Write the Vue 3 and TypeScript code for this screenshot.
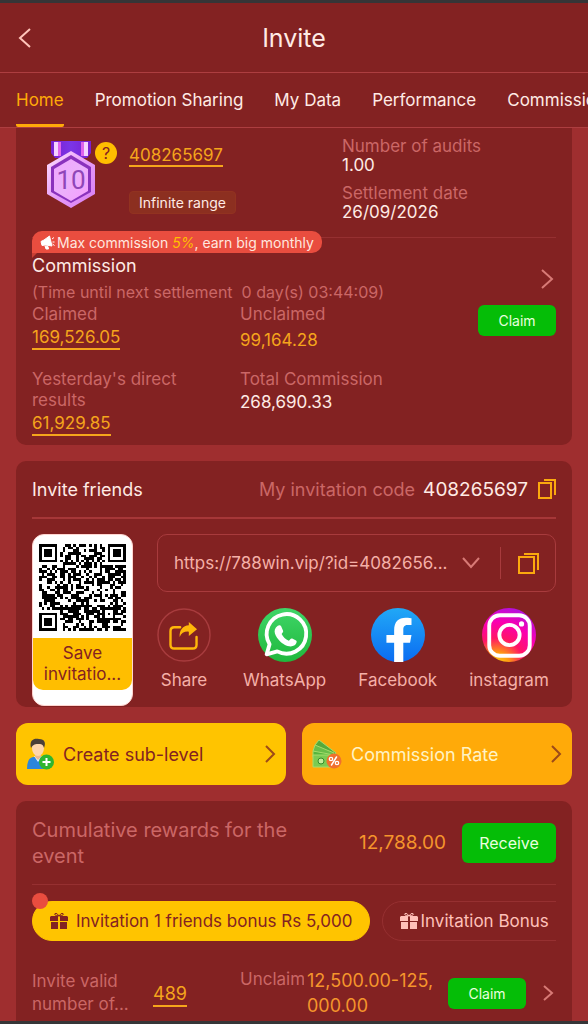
<script setup lang="ts">
import { ref } from 'vue'

interface Tab {
  id: string
  label: string
}

const tabs: Tab[] = [
  { id: 'home', label: 'Home' },
  { id: 'promotion', label: 'Promotion Sharing' },
  { id: 'data', label: 'My Data' },
  { id: 'performance', label: 'Performance' },
  { id: 'commission', label: 'Commission' },
]
const activeTab = ref<string>('home')
const activeBonus = ref<number>(0)

const QR_SIZE = 33

function inFinder(x: number, y: number): boolean {
  return (x < 8 && y < 8) || (x > QR_SIZE - 9 && y < 8) || (x < 8 && y > QR_SIZE - 9)
}

function ring(x: number, y: number, cx: number, cy: number): number {
  return Math.max(Math.abs(x - cx), Math.abs(y - cy))
}

function buildQr(): string {
  let seed = 408265697
  let d = ''
  for (let y = 0; y < QR_SIZE; y++) {
    for (let x = 0; x < QR_SIZE; x++) {
      seed = (Math.imul(seed, 1664525) + 1013904223) >>> 0
      let dark = ((seed >>> 16) & 255) < 132
      if (inFinder(x, y)) {
        const cx = x < 8 ? 3 : QR_SIZE - 4
        const cy = y < 8 ? 3 : QR_SIZE - 4
        const r = ring(x, y, cx, cy)
        dark = r === 3 || r < 2
      } else if (ring(x, y, 26, 26) < 3) {
        dark = ring(x, y, 26, 26) !== 1
      } else if (x === 6 || y === 6) {
        dark = (x + y) % 2 === 0
      }
      if (dark) d += `M${x} ${y}h1v1h-1z`
    }
  }
  return d
}

const qrPath = buildQr()
</script>

<template>
  <div class="screen">
    <header class="topbar">
      <button class="back" type="button" aria-label="Back">
        <svg width="14" height="22" viewBox="0 0 14 22"><path d="M12 2 2 11l10 9" /></svg>
      </button>
      <h1>Invite</h1>
    </header>

    <nav class="tabs">
      <button
        v-for="tab in tabs"
        :key="tab.id"
        type="button"
        class="tab"
        :class="{ active: activeTab === tab.id }"
        @click="activeTab = tab.id"
      >{{ tab.label }}</button>
    </nav>

    <main class="content">
      <section class="card summary">
        <div class="profile">
          <div class="medal">
            <svg class="medal-art" width="54" height="70" viewBox="0 0 54 70">
              <defs>
                <linearGradient id="rib" x1="0" x2="1" y1="0" y2="0">
                  <stop offset="0" stop-color="#7a1fd0" /><stop offset=".5" stop-color="#7b35e6" /><stop offset="1" stop-color="#7a1fd0" />
                </linearGradient>
                <linearGradient id="rim" x1="0" x2="1" y1="0" y2="1">
                  <stop offset="0" stop-color="#ffe3ff" /><stop offset=".5" stop-color="#e79cf8" /><stop offset="1" stop-color="#d77cf2" />
                </linearGradient>
                <linearGradient id="face" x1="0" x2="1" y1="0" y2="1">
                  <stop offset="0" stop-color="#f0a6ff" /><stop offset=".5" stop-color="#ecb0fb" /><stop offset="1" stop-color="#f79cff" />
                </linearGradient>
              </defs>
              <path d="M7 0h40v12l-4 5H11l-4-5z" fill="url(#rib)" />
              <path d="M10 1h4v14h-4zM40 1h4v14h-4z" fill="#f5d3ff" />
              <path d="M14 1h3v14h-3zM37 1h3v14h-3z" fill="#df62ec" />
              <path d="M27 10 51 24v29L27 67 3 53V24z" fill="url(#rim)" />
              <path d="M27 14 47 26v25L27 62 7 51V26z" fill="#8a32bd" />
              <path d="M27 18 44 28v22L27 60 10 50V28z" fill="url(#face)" />
              <text x="27" y="48" text-anchor="middle">10</text>
            </svg>
            <button class="help" type="button" aria-label="Help">?</button>
          </div>
          <div class="identity">
            <a href="#" class="link">408265697</a>
            <span class="range">Infinite range</span>
          </div>
          <dl class="facts">
            <div><dt>Number of audits</dt><dd>1.00</dd></div>
            <div><dt>Settlement date</dt><dd>26/09/2026</dd></div>
          </dl>
        </div>

        <div class="commission">
          <p class="ribbon">
            <svg width="15" height="15" viewBox="0 0 15 15">
              <path d="M1 6.500 4 5l5.500-4 2.500 10-6.500-1-3.500.500zM5 11l3 .500.500 2.500H6zM12 4l2-1.500M12.500 7h2M12.500 9l2 1.500" />
            </svg>
            <span>Max commission <em>5%</em>, earn big monthly</span>
          </p>
          <div class="commission-main">
            <h2>Commission</h2>
            <p class="timer"><span class="paren">(</span>Time until next settlement&nbsp; 0 day(s) 03:44:09<span class="paren">)</span></p>
            <div class="figures">
              <div class="figure"><span class="label">Claimed</span><a href="#" class="link">169,526.05</a></div>
              <div class="figure"><span class="label">Unclaimed</span><span class="plain gold lower">99,164.28</span></div>
              <div class="figure"><span class="label">Yesterday's direct results</span><a href="#" class="link">61,929.85</a></div>
              <div class="figure"><span class="label">Total Commission</span><span class="plain">268,690.33</span></div>
            </div>
          </div>
          <div class="commission-side">
            <button class="more" type="button" aria-label="Commission details">
              <svg width="14" height="20" viewBox="0 0 14 20"><path d="m2 1 10 9-10 9" /></svg>
            </button>
            <button class="green small" type="button">Claim</button>
          </div>
        </div>
      </section>

      <section class="card invite">
        <header class="invite-head">
          <h2>Invite friends</h2>
          <span class="code-label">My invitation code</span>
          <strong>408265697</strong>
          <button class="copy" type="button" aria-label="Copy invitation code">
            <svg width="18" height="20" viewBox="0 0 18 20"><path d="M1 4h12v15H1zM6 1h11v15" /></svg>
          </button>
        </header>
        <div class="invite-body">
          <button class="qr" type="button">
            <svg class="qr-code" viewBox="0 0 33 33" shape-rendering="crispEdges"><path :d="qrPath" /></svg>
            <span class="qr-label">Save<br />invitatio...</span>
          </button>
          <div class="sharing">
            <div class="url">
              <select aria-label="Invitation link">
                <option>https://788win.vip/?id=4082656...</option>
              </select>
              <svg class="down" width="18" height="12" viewBox="0 0 18 12"><path d="m1 1 8 9 8-9" /></svg>
              <button class="copy" type="button" aria-label="Copy link">
                <svg width="22" height="22" viewBox="0 0 22 22"><path d="M2 5h15v16H2zM7 2h14v16" /></svg>
              </button>
            </div>
            <div class="channels">
              <button class="channel" type="button">
                <svg width="54" height="54" viewBox="0 0 56 56">
                  <circle cx="28" cy="28" r="27" fill="none" stroke="#a83c3e" stroke-width="1.500" />
                  <path d="M24 20h-6q-4 0-4 4v14q0 4 4 4h19q4 0 4-4v-8" fill="none" stroke="#ffb70a" stroke-width="2.500" stroke-linecap="round" />
                  <path d="M33 14.500 41.500 22 33 29v-4.500q-7-.500-9.500 5.500c-.500-7 3.500-11.500 9.500-12z" fill="#ffb70a" />
                </svg>
                <span>Share</span>
              </button>
              <button class="channel" type="button">
                <svg width="54" height="54" viewBox="0 0 56 56">
                  <defs><linearGradient id="wa" x1="0" x2="0" y1="0" y2="1"><stop offset="0" stop-color="#3fd568" /><stop offset="1" stop-color="#1fb83c" /></linearGradient></defs>
                  <circle cx="28" cy="28" r="28" fill="url(#wa)" />
                  <path d="m9 48 3-10.500a20.500 20.500 0 1 1 8 7.500z" fill="none" stroke="#fff" stroke-width="4" stroke-linejoin="round" />
                  <path d="M20.500 18.500c1-1 3-1 3.500.500l2 4.500c.500 1-.500 2-1.500 3.500 1.500 3 4 5.500 7.500 7 1.500-1.500 2-3 3.500-2.300l4 2c1.500.800 0 4-1.500 5-5 3.300-12-1-15.500-4.500-4-4-8.500-11-2-15.700z" fill="#fff" />
                </svg>
                <span>WhatsApp</span>
              </button>
              <button class="channel" type="button">
                <svg width="54" height="54" viewBox="0 0 56 56">
                  <defs><linearGradient id="fb" x1="0" x2="0" y1="0" y2="1"><stop offset="0" stop-color="#21a8f6" /><stop offset="1" stop-color="#0b6cf2" /></linearGradient></defs>
                  <circle cx="28" cy="28" r="28" fill="url(#fb)" />
                  <path d="M24 56V36h-8v-8h8v-5c0-9 4.500-13 12-13 3 0 6 .500 6 .500v7h-4c-4 0-4.500 2.500-4.500 5V28h8.500l-1.500 8h-7v20q-5 .500-9.500 0z" fill="#fff" />
                </svg>
                <span>Facebook</span>
              </button>
              <button class="channel" type="button">
                <svg width="54" height="54" viewBox="0 0 56 56">
                  <defs>
                    <radialGradient id="ig" cx=".28" cy="1.050" r="1.100">
                      <stop offset="0" stop-color="#ffd21a" /><stop offset=".2" stop-color="#ff9c10" /><stop offset=".45" stop-color="#ff1566" /><stop offset=".72" stop-color="#fb00b0" /><stop offset="1" stop-color="#b012e0" />
                    </radialGradient>
                  </defs>
                  <circle cx="28" cy="28" r="28" fill="url(#ig)" />
                  <rect x="7.500" y="7.500" width="42" height="42" rx="11" fill="none" stroke="#fff" stroke-width="4" />
                  <circle cx="28.500" cy="28" r="10.500" fill="none" stroke="#fff" stroke-width="4" />
                  <circle cx="41" cy="16.500" r="2.700" fill="#fff" />
                </svg>
                <span>instagram</span>
              </button>
            </div>
          </div>
        </div>
      </section>

      <div class="shortcuts">
        <button class="shortcut yellow" type="button">
          <svg width="28" height="32" viewBox="0 0 28 32">
            <path d="M1 31q0-11 6-12h9q6 1 6 12z" fill="#2c86dc" />
            <path d="m8 18 4 6 4-6z" fill="#eaf4ff" />
            <path d="M9 14h6v5l-3 3-3-3z" fill="#edb98d" />
            <ellipse cx="12" cy="10" rx="6" ry="8" fill="#ffd6ad" />
            <path d="M5 10C3 2 8 0 13 1c6 0 7 4 5 9-1-4-3-4-6-4-4 0-5 1-7 4z" fill="#4b4038" />
            <circle cx="20.500" cy="24" r="7.500" fill="#2fb52f" />
            <path d="M20.500 20v8M16.500 24h8" stroke="#fff" stroke-width="2" />
          </svg>
          <span>Create sub-level</span>
          <svg class="arrow" width="12" height="18" viewBox="0 0 12 18"><path d="m2 1 8 8-8 8" /></svg>
        </button>
        <button class="shortcut orange" type="button">
          <svg width="30" height="30" viewBox="0 0 30 30">
            <g stroke="#a5dc6c">
              <path d="m7 1 17 13-4 5L3 6z" fill="#55a93c" />
              <path d="m3 6 19 8-2 6L1 12z" fill="#69bd49" />
              <path d="m1 12 21 4v6L1 18z" fill="#55b53d" />
              <path d="M1 16h21v12H1z" fill="#7bcb52" />
            </g>
            <circle cx="9" cy="22" r="3" fill="#c6ec9a" stroke="#358b2b" />
            <circle cx="22" cy="22" r="7.500" fill="#f0702e" />
            <path d="m19.500 26 5-8" stroke="#fff" stroke-width="1.500" stroke-linecap="round" />
            <circle cx="19" cy="20" r="1.700" fill="none" stroke="#fff" stroke-width="1.300" />
            <circle cx="25" cy="24" r="1.700" fill="none" stroke="#fff" stroke-width="1.300" />
          </svg>
          <span>Commission Rate</span>
          <svg class="arrow" width="12" height="18" viewBox="0 0 12 18"><path d="m2 1 8 8-8 8" /></svg>
        </button>
      </div>

      <section class="card rewards">
        <header class="reward-head">
          <h2>Cumulative rewards for the event</h2>
          <span class="total">12,788.00</span>
          <button class="green" type="button">Receive</button>
        </header>
        <div class="bonus-wrap">
          <div class="bonuses">
            <button class="bonus" :class="{ on: activeBonus === 0 }" type="button" @click="activeBonus = 0">
              <svg width="18" height="18" viewBox="0 0 18 18"><path d="M1 4h7v5H0V5zM10 4h7l1 1v4h-8zM1 10h7v7H1zM10 10h7v7h-7z" /><path class="bow" d="M9 4Q3 3 5 1.500 7 .500 9 4q2-3.500 4-2.500 2 1.500-4 2.500" /></svg>
              <span>Invitation 1 friends bonus Rs 5,000</span>
            </button>
            <button class="bonus tight" :class="{ on: activeBonus === 1 }" type="button" @click="activeBonus = 1">
              <svg width="18" height="18" viewBox="0 0 18 18"><path d="M1 4h7v5H0V5zM10 4h7l1 1v4h-8zM1 10h7v7H1zM10 10h7v7h-7z" /><path class="bow" d="M9 4Q3 3 5 1.500 7 .500 9 4q2-3.500 4-2.500 2 1.500-4 2.500" /></svg>
              <span>Invitation Bonus</span>
            </button>
          </div>
          <i class="dot"></i>
        </div>
        <div class="reward-row">
          <span class="label valid">Invite valid number of...</span>
          <a href="#" class="link count">489</a>
          <span class="label unclaim">Unclaim</span>
          <span class="amount">12,500.00-125,<wbr />000.00</span>
          <button class="green small" type="button">Claim</button>
          <button class="more slim" type="button" aria-label="Reward details">
            <svg width="11" height="16" viewBox="0 0 11 16"><path d="m1 1 8 7-8 7" /></svg>
          </button>
        </div>
      </section>
    </main>
  </div>
</template>

<style>
body {
  margin: 0;
  background: #9f2e2f;
}
</style>

<style scoped>
* {
  box-sizing: border-box;
}
.screen {
  height: 100vh;
  display: flex;
  flex-direction: column;
  overflow: hidden;
  border-top: 3px solid #363537;
  border-bottom: 3px solid #363537;
  background: #9f2e2f;
  color: #ffebe5;
  font-family: Inter, "Liberation Sans", sans-serif;
  font-size: 17px;
}
button,
select {
  margin: 0;
  padding: 0;
  border: 0;
  background: none;
  color: inherit;
  font: inherit;
}
h1,
h2,
p,
dl,
dd {
  margin: 0;
  font-weight: 400;
}
svg {
  display: block;
  flex: none;
}
.topbar {
  flex: none;
  height: 70px;
  display: grid;
  grid-template-columns: 50px 1fr 50px;
  align-items: center;
  background: #832222;
  border-bottom: 1px solid #ad3e40;
}
.topbar h1 {
  text-align: center;
  font-size: 25px;
  line-height: 32px;
}
.back {
  padding-left: 18px;
}
.back path {
  fill: none;
  stroke: #ffc5ba;
  stroke-width: 2;
}
.tabs {
  flex: none;
  height: 55px;
  display: flex;
  gap: 31px;
  padding: 0 16px;
  overflow: hidden;
  background: #832222;
  border-bottom: 1px solid #ad3e40;
}
.tab {
  flex: none;
  padding-top: 2px;
  border-bottom: 3px solid transparent;
  border-radius: 2px;
  white-space: nowrap;
}
.tab.active {
  color: #ffaa09;
  border-bottom-color: #ffaa09;
}
.content {
  flex: 1;
  min-height: 0;
  overflow: hidden;
  display: flex;
  flex-direction: column;
  gap: 16px;
  padding: 0 16px;
}
.card {
  flex: none;
  padding: 0 16px;
  border-radius: 10px;
  background: #832222;
}
.summary {
  border-radius: 0 0 10px 10px;
  padding-bottom: 9px;
}
.label,
dt,
.timer,
.code-label,
.reward-head h2 {
  color: #cb6766;
}
.link {
  color: #f5a51c;
  text-decoration: none;
  border-bottom: 2px solid #f5a51c;
}
.gold {
  color: #f5a51c;
}
.profile {
  height: 110px;
  display: grid;
  grid-template-columns: 97px 213px 1fr;
  border-bottom: 1px solid #963031;
}
.medal {
  position: relative;
  padding: 13px 0 0 12px;
}
.medal-art text {
  fill: #9046b8;
  font-family: Roboto, sans-serif;
  font-size: 26px;
}
.help {
  position: absolute;
  top: 14px;
  left: 63px;
  width: 22px;
  height: 22px;
  border-radius: 50%;
  background: #ffbe00;
  color: #832222;
  font-size: 16px;
  line-height: 22px;
}
.identity {
  display: flex;
  flex-direction: column;
  align-items: flex-start;
  gap: 24px;
  padding-top: 17px;
}
.identity .link {
  line-height: 20px;
}
.range {
  padding: 0 9px;
  border-radius: 4px;
  border: 1px solid #923220;
  background: #8c2f20;
  font-size: 14px;
  line-height: 21px;
}
.facts {
  padding-top: 9px;
  display: flex;
  flex-direction: column;
  gap: 9px;
  line-height: 19px;
}
.commission {
  position: relative;
  display: flex;
}
.commission-main {
  flex: 1;
  padding-top: 17px;
}
.commission h2 {
  font-size: 18px;
  line-height: 22px;
}
.ribbon {
  position: absolute;
  top: -7px;
  left: 0;
  height: 22px;
  display: flex;
  align-items: center;
  gap: 2px;
  padding: 0 8px;
  border-radius: 10px 10px 10px 0;
  background: #e94d3f;
  color: #ffe7df;
  font-size: 14px;
  white-space: nowrap;
}
.ribbon::after {
  content: '';
  position: absolute;
  left: 0;
  top: 100%;
  border-top: 5px solid #c93f35;
  border-right: 5px solid transparent;
}
.ribbon em {
  color: #ffbf00;
}
.ribbon path {
  fill: #fff;
  stroke: #fff;
}
.timer {
  padding-top: 4px;
  font-size: 16px;
  line-height: 22px;
  white-space: nowrap;
}
.figures {
  display: grid;
  grid-template-columns: 208px 1fr;
  row-gap: 18px;
  padding-top: 1px;
}
.figure {
  display: flex;
  flex-direction: column;
  align-items: flex-start;
  gap: 2px;
  line-height: 21px;
}
.figure .label {
  max-width: 170px;
}
.lower {
  padding-top: 3px;
}
.commission-side {
  width: 78px;
  margin-left: -78px;
  display: flex;
  flex-direction: column;
  align-items: flex-end;
  gap: 16px;
  padding-top: 31px;
}
.more {
  padding-right: 2px;
}
.more path,
.down path {
  fill: none;
  stroke: #d87a76;
  stroke-width: 2;
}
.green {
  flex: none;
  width: 94px;
  height: 40px;
  border-radius: 6px;
  background: #05bd07;
  color: #eaffdf;
  font-size: 16px;
}
.green.small {
  width: 78px;
  height: 31px;
  font-size: 14px;
}
.invite {
  height: 246px;
}
.invite-head {
  height: 58px;
  display: flex;
  align-items: center;
  border-bottom: 2px solid #a63738;
  font-size: 18px;
}
.invite-head h2 {
  flex: 1;
  font-size: 18px;
}
.invite-head strong {
  margin: 0 10px 0 8px;
  font-size: 19px;
  font-weight: 400;
}
.copy path {
  fill: none;
  stroke: #fba90e;
  stroke-width: 2;
}
.invite-body {
  display: flex;
  gap: 24px;
  padding-top: 15px;
}
.qr {
  flex: none;
  width: 101px;
  height: 172px;
  padding-top: 9px;
  display: flex;
  flex-direction: column;
  align-items: center;
  overflow: hidden;
  border: 1px solid #ffd5d0;
  border-radius: 12px;
  background: #fff;
}
.qr-code {
  width: 87px;
  height: 87px;
}
.qr-label {
  width: 100%;
  margin-top: 7px;
  padding: 5px 0;
  border-radius: 0 0 10px 10px;
  background: #ffbe00;
  color: #832222;
  line-height: 21px;
}
.sharing {
  flex: 1;
  min-width: 0;
}
.url {
  height: 58px;
  display: flex;
  align-items: center;
  padding: 0 16px;
  border: 1px solid #a83b3d;
  border-radius: 10px;
  color: #f5b0a8;
}
.url select {
  flex: 1;
  min-width: 0;
  height: 30px;
  appearance: none;
  outline: none;
}
.down {
  margin: 0 20px 0 8px;
}
.url .copy {
  height: 32px;
  padding-left: 16px;
  border-left: 1px solid #a83b3d;
}
.channels {
  display: flex;
  gap: 32px;
  padding-top: 16px;
}
.channel {
  display: flex;
  flex-direction: column;
  align-items: center;
  gap: 8px;
  color: #f5b0a8;
  line-height: 20px;
}
.shortcuts {
  flex: none;
  display: grid;
  grid-template-columns: 1fr 1fr;
  gap: 16px;
}
.shortcut {
  height: 62px;
  display: flex;
  align-items: center;
  gap: 9px;
  padding: 0 10px;
  border-radius: 12px;
  font-size: 18px;
  text-align: left;
  white-space: nowrap;
}
.shortcut span {
  flex: 1;
}
.yellow {
  background: #ffc400;
  color: #832222;
}
.orange {
  background: #ffaa09;
  color: #fff3c4;
}
.arrow path {
  fill: none;
  stroke: #9d4a18;
  stroke-width: 2;
}
.rewards {
  padding-bottom: 24px;
}
.reward-head {
  height: 84px;
  display: flex;
  align-items: center;
  border-bottom: 1px solid #963031;
}
.reward-head h2 {
  flex: 1;
  font-size: 20px;
  line-height: 26px;
  padding-right: 60px;
}
.total {
  padding-right: 16px;
  color: #f5952c;
  font-size: 19px;
}
.bonus-wrap {
  position: relative;
  padding-top: 16px;
}
.bonuses {
  display: flex;
  gap: 12px;
  overflow: hidden;
}
.bonus {
  flex: none;
  height: 40px;
  display: flex;
  align-items: center;
  gap: 8px;
  padding: 0 17px;
  border: 1px solid #963031;
  border-radius: 20px;
  color: #ffc0b9;
  white-space: nowrap;
}
.bonus.tight {
  gap: 2px;
  padding-right: 32px;
}
.bonus path {
  fill: currentColor;
}
.bonus .bow {
  fill: none;
  stroke: currentColor;
}
.bonus.on {
  border-color: #ffc400;
  background: #ffc400;
  color: #832222;
}
.dot {
  position: absolute;
  top: 8px;
  left: 0;
  width: 16px;
  height: 16px;
  border-radius: 50%;
  background: #e94d3f;
}
.reward-row {
  display: grid;
  grid-template-columns: 121px 87px 67px 141px 78px 1fr;
  align-items: center;
  padding-top: 27px;
  line-height: 23px;
}
.valid {
  max-width: 105px;
}
.count {
  justify-self: start;
  padding-top: 4px;
  font-size: 18px;
  line-height: 22px;
}
.unclaim {
  align-self: start;
  width: 64px;
  overflow: hidden;
}
.amount {
  color: #f5952c;
  font-size: 18px;
  line-height: 25px;
}
.slim {
  justify-self: end;
}
</style>
